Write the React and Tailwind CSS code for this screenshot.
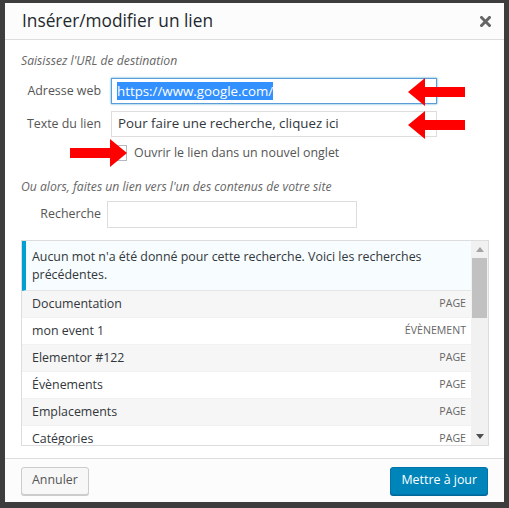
import React from 'react'

const results = [
  { title: 'Documentation', type: 'PAGE' },
  { title: 'mon event 1', type: 'ÉVÈNEMENT' },
  { title: 'Elementor #122', type: 'PAGE' },
  { title: 'Évènements', type: 'PAGE' },
  { title: 'Emplacements', type: 'PAGE' },
  { title: 'Catégories', type: 'PAGE' },
]

function Arrow({ className, flip }) {
  // thick red arrow, pointing left by default
  return (
    <svg className={className} width="58" height="28" viewBox="0 0 58 28">
      <g transform={flip ? 'translate(58 0) scale(-1 1)' : undefined}>
        <polygon points="0,14 17,0 17,9 57,9 57,19 17,19 17,28" fill="#ff0000" />
      </g>
    </svg>
  )
}

export default function App() {
  const font = { fontFamily: '"Open Sans", "Noto Sans", sans-serif' }
  return (
    <div className="w-[509px] h-[508px] bg-[#3d3d3d] pt-[3px] pl-[5px] overflow-hidden" style={font}>
      <div className="relative w-[499px] h-[499px] bg-white flex flex-col">
        {/* Header */}
        <div className="h-[37px] shrink-0 bg-[#fcfcfc] border-b border-[#dddddd] flex items-center justify-between pl-[17px] pr-[13px]">
          <h1 className="text-[17.3px] text-[#23282d] leading-none">Insérer/modifier un lien</h1>
          <svg width="11" height="11" viewBox="0 0 11 11">
            <path d="M1.5 1.5 L9.5 9.5 M9.5 1.5 L1.5 9.5" stroke="#666" strokeWidth="3" strokeLinecap="square" />
          </svg>
        </div>

        {/* Body */}
        <div className="flex-1 px-[16px] pt-[12px] text-[12.4px] text-[#32373c]">
          <p className="italic text-[#666] text-[12.2px] leading-[18px]">Saisissez l'URL de destination</p>
          <div className="flex items-center mt-[8px]">
            <span className="w-[80px] text-right text-[#555]">Adresse web</span>
            <div className="ml-[10px] w-[326px] h-[26px] border border-[#5b9dd9] shadow-[0_0_2px_rgba(30,140,190,0.8)] flex items-center px-[5px]">
              <span className="bg-[#3390ff] text-white text-[13.3px] leading-[18px]">https://www.google.com/</span>
            </div>
          </div>
          <div className="flex items-center mt-[7px]">
            <span className="w-[80px] text-right text-[#555]">Texte du lien</span>
            <div className="ml-[10px] w-[326px] h-[26px] border border-[#dddddd] flex items-center px-[6px] text-[13.3px] text-[#32373c]">
              Pour faire une recherche, cliquez ici
            </div>
          </div>
          <div className="flex items-center mt-[7px] ml-[90px]">
            <span className="w-[16px] h-[16px] border border-[#b4b9be] bg-white shrink-0" />
            <span className="ml-[7px] text-[#555]">Ouvrir le lien dans un nouvel onglet</span>
          </div>

          <p className="italic text-[#666] text-[12.2px] leading-[18px] mt-[15px]">
            Ou alors, faites un lien vers l'un des contenus de votre site
          </p>
          <div className="flex items-center mt-[5px]">
            <span className="w-[80px] text-right text-[#555]">Recherche</span>
            <div className="ml-[6px] w-[250px] h-[27px] border border-[#dddddd]" />
          </div>

          {/* Results */}
          <div className="mt-[12px] w-[468px] h-[206px] border border-[#dddddd] flex overflow-hidden">
            <div className="flex-1 flex flex-col">
              <div className="shrink-0 bg-[#f7fcfe] border-l-4 border-[#00a0d2] border-b border-b-[#e5e5e5] pl-[6px] pr-[10px] pt-[7px] pb-[6px] text-[12.4px] leading-[18px] text-[#32373c]">
                Aucun mot n'a été donné pour cette recherche. Voici les recherches précédentes.
              </div>
              {results.map((r, i) => (
                <div
                  key={r.title}
                  className={`shrink-0 h-[27px] flex items-center justify-between pl-[10px] pr-[5px] pt-[1px] border-b border-[#f1f1f1] ${
                    i % 2 === 0 ? 'bg-[#f6f6f6]' : 'bg-white'
                  }`}
                >
                  <span className="text-[12.4px] text-[#32373c]">{r.title}</span>
                  <span className="text-[10.6px] text-[#666] uppercase">{r.type}</span>
                </div>
              ))}
            </div>
            {/* Scrollbar */}
            <div className="w-[17px] shrink-0 bg-[#f1f1f1] flex flex-col items-center">
              <div className="h-[17px] flex items-center justify-center">
                <svg width="8" height="5" viewBox="0 0 8 5"><polygon points="0,5 4,0 8,5" fill="#a3a3a3" /></svg>
              </div>
              <div className="w-[15px] h-[60px] bg-[#c1c1c1]" />
              <div className="flex-1" />
              <div className="h-[17px] flex items-center justify-center">
                <svg width="8" height="5" viewBox="0 0 8 5"><polygon points="0,0 8,0 4,5" fill="#505050" /></svg>
              </div>
            </div>
          </div>
        </div>

        {/* Footer */}
        <div className="h-[44px] shrink-0 bg-[#fcfcfc] border-t border-[#dddddd] flex items-center justify-between px-[16px]">
          <button className="h-[28px] px-[10px] bg-[#f7f7f7] border border-[#cccccc] rounded-[3px] text-[12.4px] text-[#555] shadow-[0_1px_0_#ccc]">
            Annuler
          </button>
          <button className="h-[28px] px-[10px] bg-[#0085ba] border border-[#0073aa] rounded-[3px] text-[12.4px] text-white shadow-[0_1px_0_#006799]">
            Mettre à jour
          </button>
        </div>

        {/* Annotation arrows */}
        <Arrow className="absolute left-[403px] top-[75px]" />
        <Arrow className="absolute left-[403px] top-[108px]" />
        <Arrow className="absolute left-[64px] top-[136px]" flip />
      </div>
    </div>
  )
}
